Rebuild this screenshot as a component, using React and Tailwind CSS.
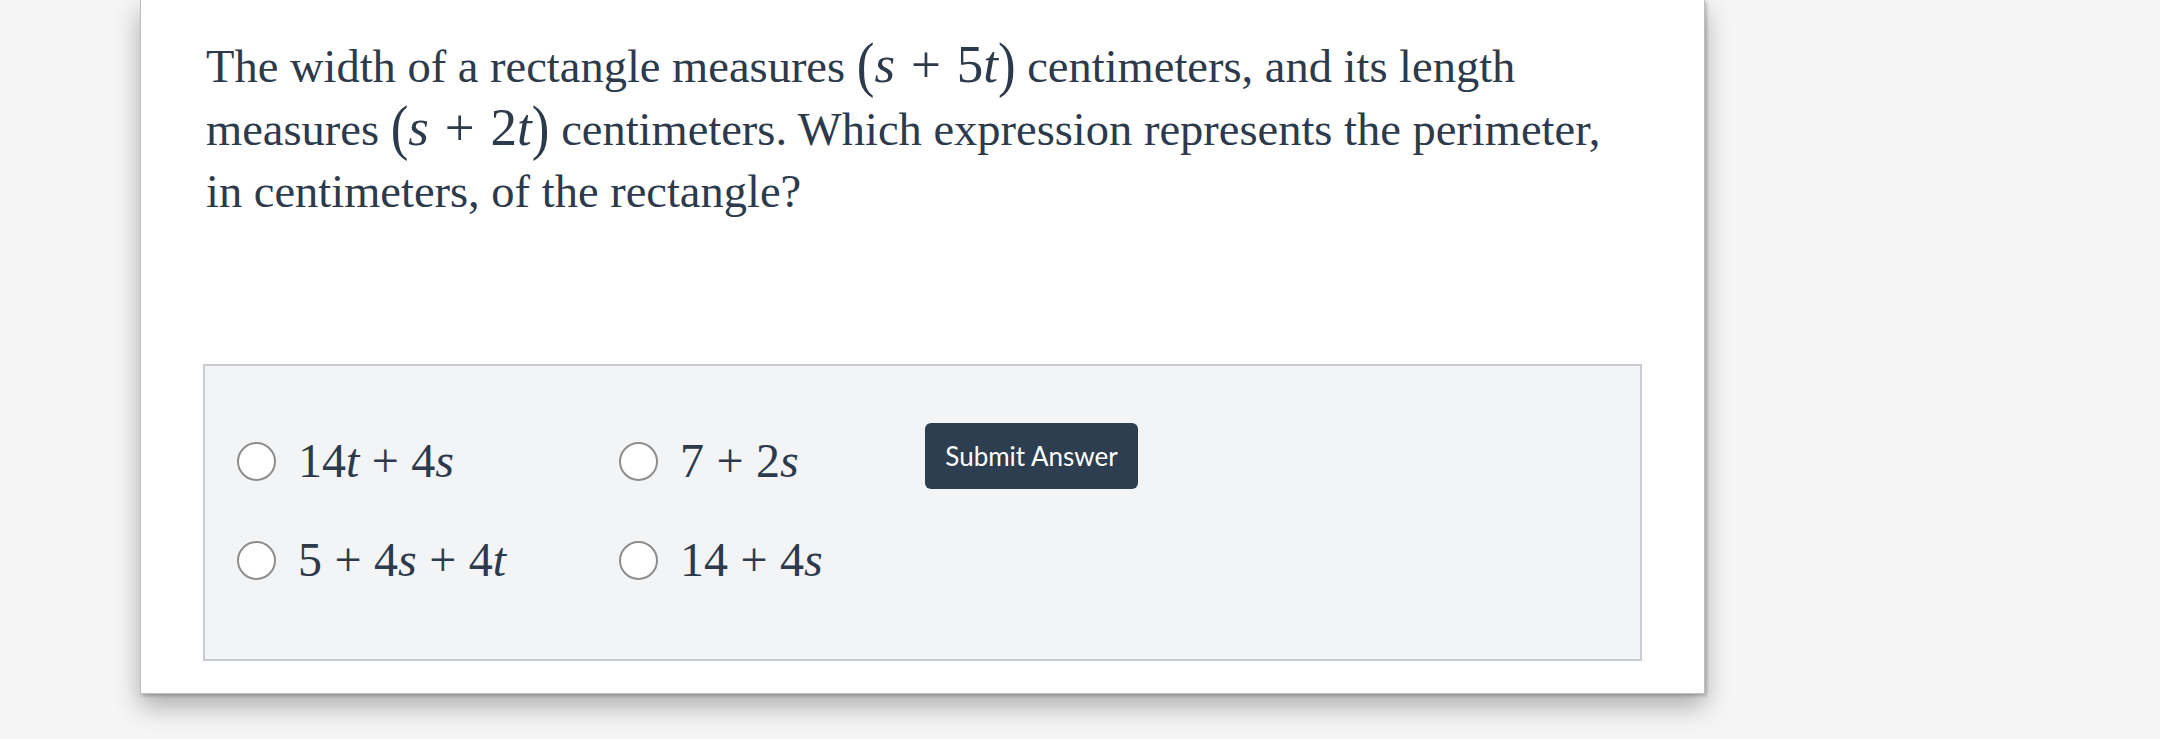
import React from "react";

function V({ children }) {
  return <span className="italic font-['Liberation_Serif','Times_New_Roman',serif]">{children}</span>;
}
function Plus({ wide }) {
  return (
    <span className={wide ? "mx-[0.3em] font-['Liberation_Serif','Times_New_Roman',serif]" : "mx-[0.26em] font-['Liberation_Serif','Times_New_Roman',serif]"}>
      +
    </span>
  );
}
function Paren({ children }) {
  return <span className="inline-block scale-y-[1.15] font-['Liberation_Serif','Times_New_Roman',serif]">{children}</span>;
}

function Radio({ children }) {
  return (
    <div className="flex items-center h-[60px]">
      <div className="w-[39px] h-[39px] rounded-full border-2 border-[#8d8d8d] bg-white shrink-0" />
      <div className="ml-[22px] text-[48px] leading-none text-[#2c3a4b] whitespace-nowrap font-['Liberation_Serif','Times_New_Roman',serif]">
        {children}
      </div>
    </div>
  );
}

export default function App() {
  return (
    <div className="min-h-[739px] w-full bg-[#f5f5f5] overflow-hidden font-['Liberation_Serif','Times_New_Roman',serif]">
      <div className="ml-[140px] w-[1565px] bg-white border-x border-b border-[#c0c0c0] shadow-[0_12px_24px_rgba(0,0,0,0.3),2px_2px_3px_rgba(0,0,0,0.2)] pt-[34px] px-[62px] pb-[32px]">
        <div className="text-[46.5px] text-[#2c3a4b] pl-[3px] font-['Liberation_Serif','Times_New_Roman',serif]">
          <div className="whitespace-nowrap leading-[65px]">
            The width of a rectangle measures{" "}
            <span className="text-[53px] leading-none">
              <Paren>(</Paren>
              <V>s</V>
              <Plus wide />5<V>t</V>
              <Paren>)</Paren>
            </span>{" "}
            centimeters, and its length
          </div>
          <div className="whitespace-nowrap leading-[62px]">
            measures{" "}
            <span className="text-[53px] leading-none">
              <Paren>(</Paren>
              <V>s</V>
              <Plus wide />2<V>t</V>
              <Paren>)</Paren>
            </span>{" "}
            centimeters. Which expression represents the perimeter,
          </div>
          <div className="whitespace-nowrap leading-[62px]">in centimeters, of the rectangle?</div>
        </div>

        <div className="mt-[141px] h-[297px] border-2 border-[#c9ccd0] bg-[#f3f4f6] flex items-start pl-[32px]">
          <div className="grid grid-cols-[382px_306px] gap-y-[39px] pt-[65px]">
            <Radio>
              14<V>t</V>
              <Plus />4<V>s</V>
            </Radio>
            <Radio>
              7<Plus />2<V>s</V>
            </Radio>
            <Radio>
              5<Plus />4<V>s</V>
              <Plus />4<V>t</V>
            </Radio>
            <Radio>
              14<Plus />4<V>s</V>
            </Radio>
          </div>
          <button className="mt-[57px] w-[213px] h-[66px] rounded-[6px] bg-[#2c3e50] text-white text-[26px] font-['Lato',sans-serif] flex items-center justify-center">
            Submit Answer
          </button>
        </div>
      </div>
    </div>
  );
}
